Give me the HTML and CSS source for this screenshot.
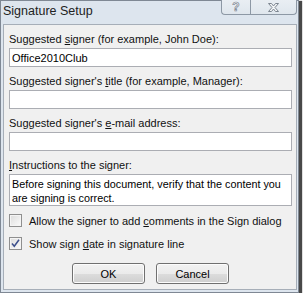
FILE: index.html
```html
<!DOCTYPE html>
<html lang="en">

<head>
   <meta charset="UTF-8">
   <meta name="viewport" content="width=device-width, initial-scale=1.0">
   <title>Signature Setup</title>

   <link rel="stylesheet" href="styles.css">
</head>

<body>
   <div class="window">
      <!-- Title bar with caption buttons -->
      <div class="titlebar">
         <span class="title">Signature Setup</span>
         <div class="caption-buttons">
            <span class="cap cap-help">?</span>
            <span class="cap cap-close">
               <svg width="13" height="11" viewBox="0 0 13 11">
                  <path d="M1.5 1.5h3l2 2.5 2-2.5h3l-3.5 4 3.5 4h-3l-2-2.5-2 2.5h-3l3.5-4z" fill="#f4f6f8" stroke="#7d8691" stroke-width="1" stroke-linejoin="round" />
               </svg>
            </span>
         </div>
      </div>

      <!-- Dialog body -->
      <form class="panel" id="signatureForm">
         <label class="field-label" for="signer">Suggested <u>s</u>igner (for example, John Doe):</label>
         <input class="textbox" type="text" id="signer" value="Office2010Club">

         <label class="field-label" for="title">Suggested signer's <u>t</u>itle (for example, Manager):</label>
         <input class="textbox" type="text" id="title">

         <label class="field-label" for="email">Suggested signer's <u>e</u>-mail address:</label>
         <input class="textbox" type="text" id="email">

         <label class="field-label" for="instructions"><u>I</u>nstructions to the signer:</label>
         <div class="textarea" id="instructions">Before signing this document, verify that the content you<br>are signing is correct.</div>

         <label class="check">
            <span class="box"></span>
            <span>Allow the signer to add <u>c</u>omments in the Sign dialog</span>
         </label>
         <label class="check">
            <span class="box">
               <svg width="9" height="9" viewBox="0 0 9 9">
                  <path d="M1 4.5l2.3 2.8L8 0.8" fill="none" stroke="#3c4f8c" stroke-width="1.5" />
               </svg>
            </span>
            <span>Show sign <u>d</u>ate in signature line</span>
         </label>

         <div class="buttons">
            <button type="submit" class="btn">OK</button>
            <button type="button" class="btn">Cancel</button>
         </div>
      </form>
   </div>
</body>

</html>
```

FILE: styles.css
```css
/* General page */
body {
   margin: 0;
   background-color: #ffffff;
   font-family: "Liberation Sans", Arial, sans-serif;
}

/* Window frame */
.window {
   box-sizing: border-box;
   width: 299px;
   height: 293px;
   background-color: #dde5ee;
   border: 1px solid #7f8894;
   box-shadow: 3px 1px 1px rgba(40, 40, 40, 0.85);
   display: flex;
   flex-direction: column;
}

/* Title bar */
.titlebar {
   height: 23px;
   display: flex;
   justify-content: space-between;
   align-items: flex-start;
   padding-left: 2px;
   padding-right: 1px;
}

.title {
   font-size: 12.5px;
   color: #222;
   line-height: 20px;
}

.caption-buttons {
   display: flex;
   margin-top: -1px;
}

.cap {
   box-sizing: border-box;
   height: 15px;
   display: flex;
   align-items: center;
   justify-content: center;
   border: 1px solid #8d98a5;
   border-top: none;
   background: linear-gradient(#e9eef3, #dfe6ed);
}

.cap-help {
   width: 29px;
   border-radius: 0 0 0 4px;
   border-right: none;
   font-size: 12px;
   font-weight: bold;
   color: #f3f5f7;
   -webkit-text-stroke: 0.7px #7d8691;
}

.cap-close {
   width: 47px;
   border-radius: 0 0 4px 0;
}

/* Content panel */
.panel {
   flex: 1;
   margin: 0 1px 2px 2px;
   background-color: #f0f0f0;
   border: 1px solid #a6aeb8;
   padding: 7px 4px 0 5px;
   display: flex;
   flex-direction: column;
   font-size: 11px;
   color: #111;
}

.field-label {
   line-height: 14px;
   margin-bottom: 2px;
}

.textbox {
   box-sizing: border-box;
   height: 19px;
   width: 100%;
   margin: 0 0 7px 0;
   padding: 0 2px;
   border: 1px solid #abadb3;
   background-color: #ffffff;
   font-family: inherit;
   font-size: 11px;
   color: #000;
   outline: none;
}

.textarea {
   box-sizing: border-box;
   height: 32px;
   border: 1px solid #abadb3;
   background-color: #ffffff;
   padding: 2px 2px;
   line-height: 14px;
   font-size: 10.8px;
   color: #000;
   margin-bottom: 8px;
   white-space: nowrap;
   overflow: hidden;
}

/* Checkboxes */
.check {
   display: flex;
   align-items: center;
   gap: 7px;
   height: 13px;
   margin-bottom: 10px;
   white-space: nowrap;
}

.box {
   box-sizing: border-box;
   flex-shrink: 0;
   width: 13px;
   height: 13px;
   border: 1px solid #8f8f8f;
   background: linear-gradient(135deg, #dcdcdc, #fbfbfb);
   box-shadow: inset 0 0 0 1px #f4f4f4;
   display: flex;
   align-items: center;
   justify-content: center;
}

/* Buttons */
.buttons {
   display: flex;
   gap: 11px;
   padding-left: 63px;
   margin-top: 3px;
}

.btn {
   width: 73px;
   height: 21px;
   border: 1px solid #707070;
   border-radius: 3px;
   background: linear-gradient(#f2f2f2 0%, #ebebeb 50%, #dddddd 51%, #cfcfcf 100%);
   box-shadow: inset 0 0 0 1px #fcfcfc;
   font-family: inherit;
   font-size: 11px;
   color: #000;
   padding: 0;
}
```
